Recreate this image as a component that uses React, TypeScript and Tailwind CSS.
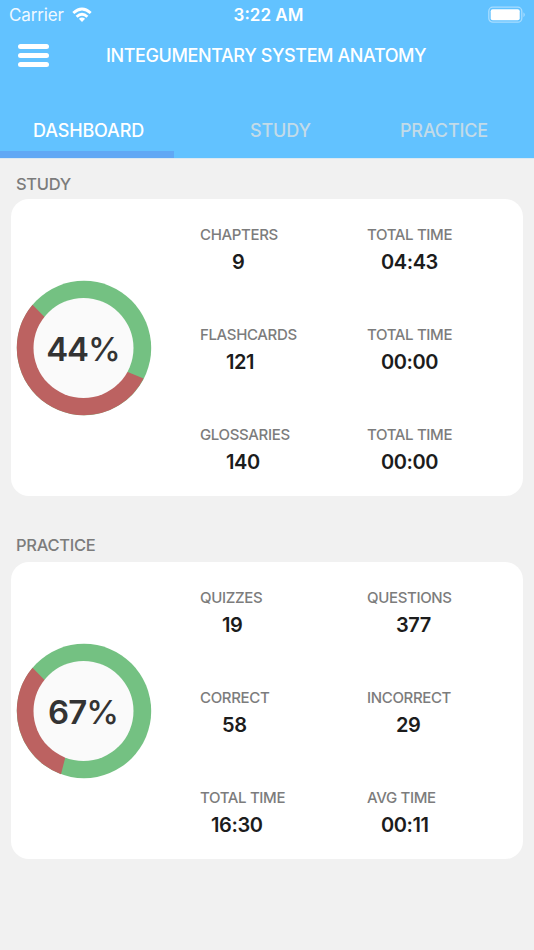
type Stat = {
  label: string
  value: string
  offset: string
}

type GaugeData = {
  percent: number
  red: string
}

// Gauges are drawn in a 136x136 box around (68, 68)
const studyGauge: GaugeData = {
  percent: 44,
  red: 'M16.5 24.8 A67.2 67.2 0 0 0 0.8 68 A67.2 67.2 0 0 0 68 135.2 A67.2 67.2 0 0 0 127.6 98.4 L111.7 92 L68 68 L28.3 36.7 Z',
}

const practiceGauge: GaugeData = {
  percent: 67,
  red: 'M16.5 24.8 A67.2 67.2 0 0 0 0.8 68 A67.2 67.2 0 0 0 45 131.2 L49.3 114.4 L68 68 L28.3 36.7 Z',
}

const studyStats: Stat[] = [
  { label: 'CHAPTERS', value: '9', offset: 'pl-[32px]' },
  { label: 'TOTAL TIME', value: '04:43', offset: 'pl-[14px]' },
  { label: 'FLASHCARDS', value: '121', offset: 'pl-[26px]' },
  { label: 'TOTAL TIME', value: '00:00', offset: 'pl-[14px]' },
  { label: 'GLOSSARIES', value: '140', offset: 'pl-[26px]' },
  { label: 'TOTAL TIME', value: '00:00', offset: 'pl-[14px]' },
]

const practiceStats: Stat[] = [
  { label: 'QUIZZES', value: '19', offset: 'pl-[22px]' },
  { label: 'QUESTIONS', value: '377', offset: 'pl-[29px]' },
  { label: 'CORRECT', value: '58', offset: 'pl-[22px]' },
  { label: 'INCORRECT', value: '29', offset: 'pl-[29px]' },
  { label: 'TOTAL TIME', value: '16:30', offset: 'pl-[11px]' },
  { label: 'AVG TIME', value: '00:11', offset: 'pl-[14px]' },
]

function StatusBar() {
  return (
    <div className="grid h-[30px] grid-cols-3 items-center pr-[8px] pl-[9px] text-[17px] text-white">
      <div className="flex items-center gap-[8px]">
        <span className="pt-[2px] tracking-[-0.15px] opacity-90">Carrier</span>
        <svg width="20" height="16" viewBox="0 0 20 16" fill="none" stroke="white" strokeWidth="2.8">
          <path d="M1.3 6.1 Q10 -2 18.7 6.1" />
          <path d="M4.6 9.8 Q10 4.6 15.4 9.8" />
          <path d="M6.9 11.8 Q10 9.2 13.1 11.8 L10 15 Z" fill="white" stroke="none" />
        </svg>
      </div>
      <span className="pt-[2px] pl-[2px] text-center font-semibold">3:22 AM</span>
      <svg className="justify-self-end" width="38" height="18" viewBox="0 0 38 18">
        <rect x="0.8" y="1.2" width="33" height="15" rx="4" fill="none" stroke="white" strokeOpacity="0.45" strokeWidth="1.3" />
        <rect x="2.7" y="3.2" width="29" height="11" rx="2" fill="white" />
        <path d="M35.5 6.2 Q38 8.7 35.5 11.2 Z" fill="white" fillOpacity="0.5" />
      </svg>
    </div>
  )
}

function Gauge({ percent, red }: GaugeData) {
  return (
    <div className="mt-[80.5px] ml-[5px] grid h-[136px] w-[136px] place-items-center">
      <svg className="col-start-1 row-start-1" width="136" height="136" viewBox="0 0 136 136">
        <circle cx="68" cy="68" r="67.2" fill="#74c182" />
        <path d={red} fill="#bc6261" />
        <circle cx="67.5" cy="68" r="50" fill="#fafafa" />
      </svg>
      <span className="col-start-1 row-start-1 pt-[3px] pr-[3px] text-[33px] leading-none font-[560] tracking-[-1px] text-[#333]">
        {percent}
        <span className="font-medium tracking-[-2px]">%</span>
      </span>
    </div>
  )
}

function StatItem({ label, value, offset }: Stat) {
  return (
    <div className="h-[100px]">
      <div className="text-[15px] leading-5 font-[550] tracking-[-0.35px] text-[#7c7c7c]">
        {label}
      </div>
      <div className={`mt-[3px] text-[20px] leading-7 font-semibold tracking-[-0.4px] text-[#1c1c1c] ${offset}`}>
        {value}
      </div>
    </div>
  )
}

function Card({ gauge, stats }: { gauge: GaugeData; stats: Stat[] }) {
  return (
    <div className="mr-[11px] ml-[11px] flex h-[297px] rounded-[18px] bg-white">
      <Gauge {...gauge} />
      <div className="ml-[48px] grid grid-cols-[167px_140px] content-start pt-[26px]">
        {stats.map((stat, i) => (
          <StatItem key={i} {...stat} />
        ))}
      </div>
    </div>
  )
}

export default function App() {
  return (
    <div className="h-[950px] w-[534px] overflow-hidden bg-[#f1f1f1] font-['Inter',sans-serif] whitespace-nowrap">
      <header className="flex h-[159px] flex-col border-b border-[#dbe9f2] bg-[#62c2ff]">
        <StatusBar />
        <div className="flex h-[50px] items-center pl-[18px]">
          <button className="flex flex-col gap-[4px]" aria-label="Menu">
            <span className="h-[5px] w-[31px] rounded-full bg-white" />
            <span className="h-[5px] w-[31px] rounded-full bg-white" />
            <span className="h-[5px] w-[31px] rounded-full bg-white" />
          </button>
          <h1 className="ml-[57px] pt-[1px] text-[18px] font-[550] tracking-[-0.4px] text-white">
            INTEGUMENTARY SYSTEM ANATOMY
          </h1>
        </div>
        <nav className="mt-auto flex h-[56px] text-[18px] font-[550] tracking-[-0.15px] text-[#c3dbe8]">
          <div className="flex w-[174px] flex-col border-b-[7px] border-[#60a8f5] pt-[15px] pl-[33px] text-white">
            DASHBOARD
          </div>
          <div className="pt-[15px] pl-[76px]">STUDY</div>
          <div className="ml-auto pt-[15px] pr-[46px]">PRACTICE</div>
        </nav>
      </header>

      <h2 className="h-[40px] pt-[13px] pl-[16px] text-[16.5px] leading-6 font-[550] tracking-[-0.3px] text-[#7c7c7c]">STUDY</h2>
      <Card gauge={studyGauge} stats={studyStats} />
      <h2 className="h-[66px] pt-[37px] pl-[16px] text-[16.5px] leading-6 font-[550] tracking-[-0.3px] text-[#7c7c7c]">PRACTICE</h2>
      <Card gauge={practiceGauge} stats={practiceStats} />
    </div>
  )
}
